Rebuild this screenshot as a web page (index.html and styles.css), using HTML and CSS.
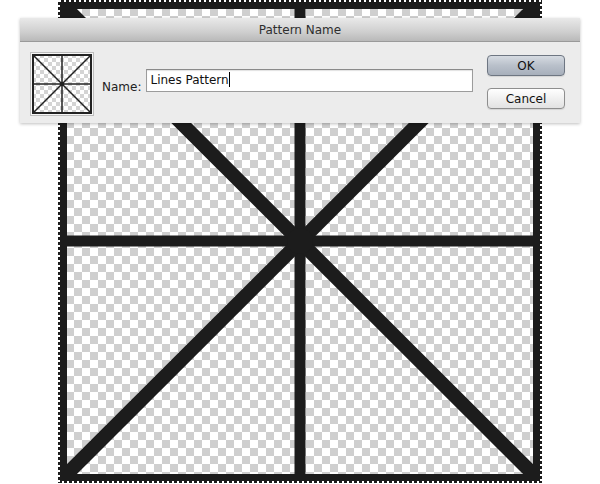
FILE: index.html
```html
<!DOCTYPE html>
<html lang="en">
  <head>
    <meta charset="UTF-8" />
    <meta name="viewport" content="width=device-width, initial-scale=1.0" />
    <title>Pattern Name</title>
    <link rel="stylesheet" href="styles.css">
  </head>
  <body>
    <div class="stage">
      <!-- the pattern document on the canvas -->
      <svg class="canvas" width="484" height="484" viewBox="0 0 484 484">
        <defs>
          <pattern id="checks" width="16" height="16" patternUnits="userSpaceOnUse">
            <rect width="16" height="16" fill="#fff" />
            <rect width="8" height="8" fill="#cfcfcf" />
            <rect x="8" y="8" width="8" height="8" fill="#cfcfcf" />
          </pattern>
        </defs>
        <rect x="0" y="0" width="484" height="483" fill="url(#checks)" />
        <g stroke="#1c1c1c" stroke-width="11">
          <line x1="242" y1="0" x2="242" y2="483" />
          <line x1="0" y1="241" x2="484" y2="241" />
        </g>
        <g stroke="#1c1c1c" stroke-width="14">
          <line x1="5" y1="5" x2="479" y2="478" />
          <line x1="479" y1="5" x2="5" y2="478" />
        </g>
        <circle cx="242" cy="241" r="13" fill="#1c1c1c" />
        <rect x="4.5" y="4.5" width="475" height="474" fill="none" stroke="#1c1c1c" stroke-width="9" />
        <rect x="1" y="1" width="482" height="481" fill="none" stroke="#fff" stroke-width="2" stroke-dasharray="2 3" />
      </svg>

      <div class="dialog">
        <div class="titlebar">Pattern Name</div>
        <div class="dialog-body">
          <div class="thumb">
            <svg width="60" height="60" viewBox="0 0 60 60">
              <defs>
                <pattern id="mini" width="8" height="8" patternUnits="userSpaceOnUse">
                  <rect width="8" height="8" fill="#fff" />
                  <rect width="4" height="4" fill="#d4d4d4" />
                  <rect x="4" y="4" width="4" height="4" fill="#d4d4d4" />
                </pattern>
              </defs>
              <rect x="1" y="1" width="58" height="58" fill="url(#mini)" />
              <g stroke="#222" stroke-width="1.5">
                <line x1="30" y1="1" x2="30" y2="59" />
                <line x1="1" y1="30" x2="59" y2="30" />
                <line x1="1" y1="1" x2="59" y2="59" />
                <line x1="59" y1="1" x2="1" y2="59" />
              </g>
              <circle cx="30" cy="30" r="2.3" fill="#222" />
              <rect x="1" y="1" width="58" height="58" fill="none" stroke="#222" stroke-width="2" />
            </svg>
          </div>
          <label class="name-label" for="pname">Name:</label>
          <div class="name-field">
            <span id="pname">Lines Pattern</span><span class="caret"></span>
          </div>
          <div class="buttons">
            <button class="btn btn-default" type="button">OK</button>
            <button class="btn" type="button">Cancel</button>
          </div>
        </div>
      </div>
    </div>
  </body>
</html>
```

FILE: styles.css
```css
body {
  margin: 0;
  background: #fff;
  font-family: "DejaVu Sans", "Liberation Sans", sans-serif;
}
.stage {
  position: relative;
  width: 600px;
  height: 484px;
  overflow: hidden;
}
.canvas {
  display: block;
  margin-left: 58px;
}
.dialog {
  position: absolute;
  left: 20px;
  top: 18px;
  width: 560px;
  height: 105px;
  background: #ececec;
  box-shadow: 0 1px 3px rgba(0, 0, 0, 0.25);
}
.titlebar {
  height: 23px;
  line-height: 24px;
  text-align: center;
  font-size: 12px;
  color: #2e2e2e;
  background: linear-gradient(#e9e9e9, #cfcfcf 60%, #b9b9b9);
  border-bottom: 1px solid #9a9a9a;
}
.dialog-body {
  display: flex;
  align-items: flex-start;
  padding: 10px 15px 0 10px;
}
.thumb {
  width: 60px;
  height: 60px;
  padding: 1px;
  border: 1px solid #bdbdbd;
  background: #f6f6f6;
}
.thumb svg {
  display: block;
}
.name-label {
  margin: 28px 0 0 8px;
  font-size: 12px;
  color: #222;
}
.name-field {
  margin: 17px 0 0 5px;
  width: 327px;
  height: 23px;
  box-sizing: border-box;
  border: 1px solid #9c9c9c;
  border-top-color: #8a8a8a;
  background: #fff;
  box-shadow: inset 0 1px 1px rgba(0, 0, 0, 0.12);
  font-size: 12px;
  line-height: 21px;
  padding-left: 3px;
  color: #111;
}
.caret {
  display: inline-block;
  width: 1px;
  height: 15px;
  background: #000;
  vertical-align: -3px;
}
.buttons {
  margin: 3px 0 0 14px;
  display: flex;
  flex-direction: column;
  gap: 12px;
}
.btn {
  width: 78px;
  height: 21px;
  padding: 0;
  border: 1px solid #8e8e8e;
  border-radius: 4px;
  background: linear-gradient(#ffffff, #f0f0f0 50%, #e2e2e2);
  font-family: "DejaVu Sans", "Liberation Sans", sans-serif;
  font-size: 12px;
  color: #111;
  box-shadow: 0 1px 1px rgba(0, 0, 0, 0.1);
}
.btn-default {
  border-color: #6e7682;
  background: linear-gradient(#d6dbe2, #b9c0ca 50%, #a7afbb);
}
```
